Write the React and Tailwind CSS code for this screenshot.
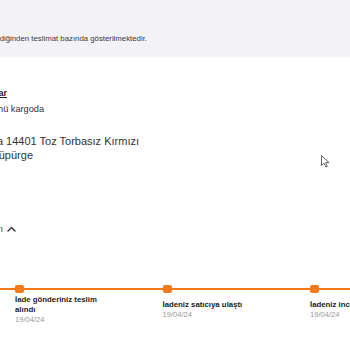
import React from "react";

const steps = [
  { title: "İade gönderiniz teslim alındı", date: "19/04/24" },
  { title: "İadeniz satıcıya ulaştı", date: "19/04/24" },
  { title: "İadeniz incelendi", date: "19/04/24" },
];

export default function App() {
  return (
    <div className="relative w-[350px] h-[350px] overflow-hidden bg-white font-['Liberation_Sans',sans-serif] text-[#333]">
      {/* Info band */}
      <div className="h-[57px] bg-[#f3f3f7] flex items-end pb-[13px]">
        <div className="w-[147px] overflow-hidden flex justify-end">
          <span className="whitespace-nowrap text-[7.8px] leading-[10px] text-[#3a3a3a]">
            Siparişiniz birden fazla satıcıdan gönderildiğinden teslimat bazında gösterilmektedir.
          </span>
        </div>
      </div>

      {/* Delivery info */}
      <div className="mt-[30px] w-[7px] overflow-hidden flex justify-end">
        <a className="whitespace-nowrap text-[9px] leading-[12px] font-bold underline text-[#222]">
          Detaylar
        </a>
      </div>
      <div className="mt-[4px] w-[44px] overflow-hidden flex justify-end">
        <span className="whitespace-nowrap text-[9.2px] leading-[12px]">Ürünü kargoda</span>
      </div>

      {/* Product name */}
      <div className="mt-[19px] text-[11px] leading-[14px] text-[#333]">
        <div className="w-[139px] overflow-hidden flex justify-end">
          <span className="whitespace-nowrap">Tesla 14401 Toz Torbasız Kırmızı</span>
        </div>
        <div className="w-[33px] overflow-hidden flex justify-end">
          <span className="whitespace-nowrap">Süpürge</span>
        </div>
      </div>

      {/* Toggle */}
      <div className="mt-[61px] flex items-center gap-[4px] h-[12px]">
        <div className="w-[3px] overflow-hidden flex justify-end">
          <span className="whitespace-nowrap text-[9px] leading-[12px]">İade Adımları</span>
        </div>
        <svg width="9" height="6" viewBox="0 0 9 6" fill="none" stroke="#333" strokeWidth="1.4" strokeLinecap="round" strokeLinejoin="round">
          <path d="M1 5 L4.5 1.5 L8 5" />
        </svg>
      </div>

      {/* Timeline */}
      <div className="mt-[53px] h-[2px] bg-[#f27a1a]" />
      <div className="-mt-[5px] flex pl-[15px]">
        {steps.map((s, i) => (
          <div key={i} className="w-[147.5px] shrink-0 flex flex-col">
            <div className="w-[9px] h-[8px] rounded-[2px] bg-[#f27a1a]" />
            <div className="mt-[1.5px] h-[30px] flex items-center">
              <div className="w-[96px]">
                <div className="text-[7.8px] leading-[10px] font-bold text-[#222]">{s.title}</div>
                <div className="text-[7.6px] leading-[10px] text-[#999]">{s.date}</div>
              </div>
            </div>
          </div>
        ))}
      </div>

      {/* Mouse cursor */}
      <svg className="absolute left-[321px] top-[155px]" width="9" height="13" viewBox="0 0 9 13">
        <path d="M0.5 0.5 L0.5 10.5 L3 8.2 L4.8 12 L6.3 11.3 L4.6 7.6 L8 7.6 Z" fill="#fff" stroke="#555" strokeWidth="0.9" strokeLinejoin="round" />
      </svg>
    </div>
  );
}
